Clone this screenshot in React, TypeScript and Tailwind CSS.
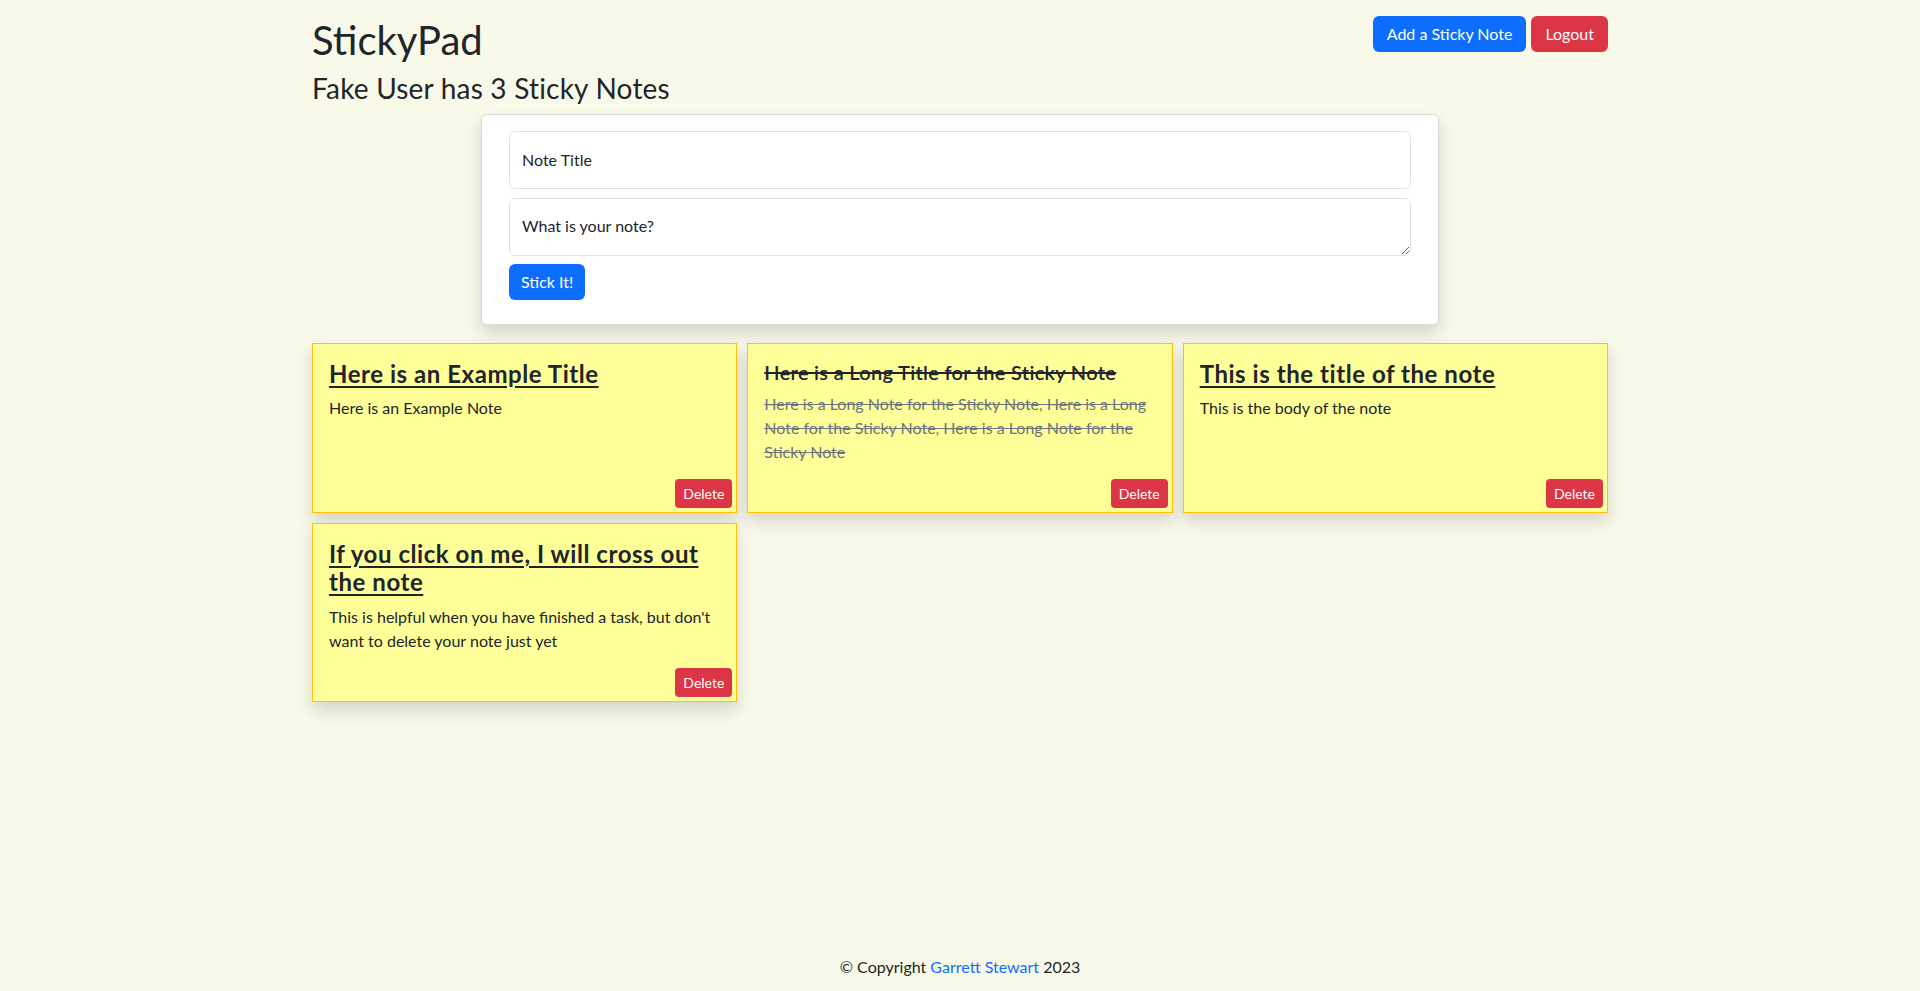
import React from 'react'

type Note = { title: string; body: string; done?: boolean }

const notes: Note[] = [
  { title: 'Here is an Example Title', body: 'Here is an Example Note' },
  {
    title: 'Here is a Long Title for the Sticky Note',
    body: 'Here is a Long Note for the Sticky Note, Here is a Long Note for the Sticky Note, Here is a Long Note for the Sticky Note',
    done: true,
  },
  { title: 'This is the title of the note', body: 'This is the body of the note' },
  {
    title: 'If you click on me, I will cross out the note',
    body: "This is helpful when you have finished a task, but don't want to delete your note just yet",
  },
]

function StickyNote({ note }: { note: Note }) {
  return (
    <div className="relative border border-[#ffc107] bg-[#ffff99] px-4 pt-4 pb-[48px] shadow-[0_8px_16px_rgba(0,0,0,0.15)]">
      {note.done ? (
        <h5 className="mb-2 text-[20px] leading-[1.2] font-semibold tracking-[0.3px] text-[#212529] line-through">{note.title}</h5>
      ) : (
        <h4 className="mb-2 text-[24px] leading-[1.2] font-bold tracking-[0.55px] text-[#212529] underline underline-offset-[3px]">{note.title}</h4>
      )}
      <p className={note.done ? 'text-[#6c757d] line-through' : 'text-[#212529]'}>{note.body}</p>
      <button className="absolute right-[4px] bottom-[4px] rounded-[4px] bg-[#dc3545] px-2 py-1 text-[14px] leading-[1.5] text-white">
        Delete
      </button>
    </div>
  )
}

export default function App() {
  return (
    <div className="flex min-h-screen flex-col bg-[#f9f9ea] font-['Lato',sans-serif] text-[16px] leading-[1.5] text-[#212529]">
      <div className="mx-auto w-full max-w-[1320px] px-3 pt-4">
        <div className="flex items-start justify-between">
          <div>
            <h1 className="mb-2 text-[40px] leading-[1.2] font-normal">StickyPad</h1>
            <h3 className="mb-2 text-[28px] leading-[1.2] font-normal tracking-[0.2px]">Fake User has 3 Sticky Notes</h3>
          </div>
          <div className="flex gap-[5px]">
            <button className="rounded-[6px] bg-[#0d6efd] px-[14px] py-[6px] text-white">Add a Sticky Note</button>
            <button className="rounded-[6px] bg-[#dc3545] px-[14px] py-[6px] text-white">Logout</button>
          </div>
        </div>

        <div className="mx-auto w-[958px] rounded-[6px] border border-[#d9d9d9] bg-white px-[27px] pt-4 pb-6 shadow-[0_8px_16px_rgba(0,0,0,0.15)]">
          <input
            className="block h-[58px] w-full rounded-[6px] border border-[#dee2e6] px-3 text-[#212529] outline-none placeholder:text-[#212529]"
            placeholder="Note Title"
          />
          <textarea
            className="mt-[9px] block h-[58px] w-full rounded-[6px] border border-[#dee2e6] px-3 pt-[15px] text-[#212529] outline-none placeholder:text-[#212529]"
            placeholder="What is your note?"
          />
          <button className="mt-2 rounded-[6px] bg-[#0d6efd] px-3 py-[6px] text-white">Stick It!</button>
        </div>

        <div className="mt-[18px] grid grid-cols-3 gap-[10px]">
          {notes.map((n, i) => (
            <StickyNote key={i} note={n} />
          ))}
        </div>
      </div>

      <footer className="mt-auto py-3 text-center">
        © Copyright <a className="text-[#0d6efd]" href="#">Garrett Stewart</a> 2023
      </footer>
    </div>
  )
}
